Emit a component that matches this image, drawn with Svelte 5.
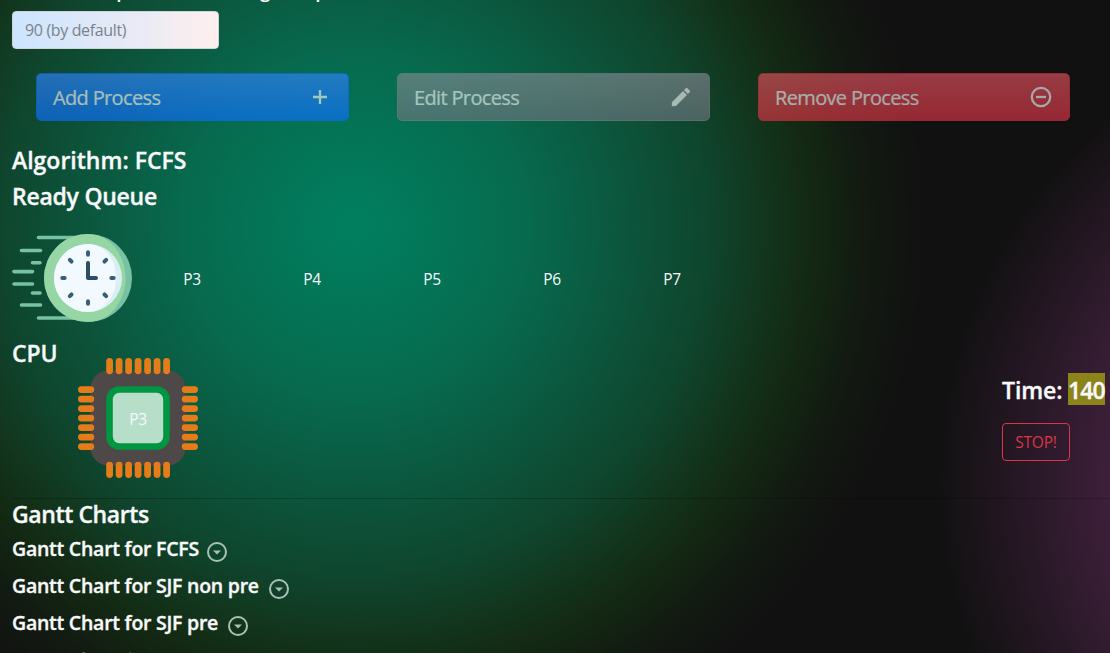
<script>
  const queue = ['P3', 'P4', 'P5', 'P6', 'P7'];
  const charts = [
    { label: 'FCFS', width: 187 },
    { label: 'SJF non pre', width: 249 },
    { label: 'SJF pre', width: 208 }
  ];
  const pins = [0, 1, 2, 3, 4, 5, 6];
  const ticks = [0, 45, 90, 135, 180, 225, 270, 315];
  const speedLines = [
    [25, 3.5, 65], [8, 16.5, 29], [19, 28.8, 28.5], [0.5, 37.6, 21],
    [0.5, 50, 21], [19, 59, 28.5], [8, 71, 29], [25, 84, 65]
  ];
</script>

<main>
  <div class="speed">Select the speed for running setup</div>
  <input placeholder="90 (by default)" />

  <div class="actions">
    <button class="action add"><span>Add Process</span>
      <svg viewBox="0 0 24 24"><path d="M12 5v14M5 12h14" stroke="currentColor" stroke-width="2.300" /></svg>
    </button>
    <button class="action edit"><span>Edit Process</span>
      <svg viewBox="0 0 24 24"><path fill="currentColor" d="M3 17.25V21h3.75L17.81 9.94l-3.75-3.75L3 17.25zM20.71 7.04a1 1 0 0 0 0-1.41l-2.34-2.34a1 1 0 0 0-1.41 0l-1.83 1.83 3.75 3.75 1.83-1.83z" stroke="currentColor" stroke-width="0.300" /></svg>
    </button>
    <button class="action remove"><span>Remove Process</span>
      <svg viewBox="0 0 24 24" fill="none" stroke="currentColor" stroke-width="2.300"><circle cx="12" cy="12" r="9.200" /><path d="M7 12h10" /></svg>
    </button>
  </div>

  <h4 class="algo"><span>Algorithm: FCFS</span></h4>
  <h4 class="ready"><span>Ready Queue</span></h4>

  <div class="queue">
    <svg class="clock" width="120" height="88" viewBox="0 0 120 88">
      <g stroke="#78c2a4" stroke-width="3.6" stroke-linecap="round">
        {#each speedLines as [x1, y, x2]}
          <line x1={x1 + 1.5} y1={y} x2={x2 - 0.5} y2={y} />
        {/each}
      </g>
      <circle cx="76" cy="44" r="44" fill="#78c2a4" />
      <path d="M76 0a44 44 0 0 0 0 88c21 0 37.500-20 37.500-44S97 0 76 0z" fill="#96d6a4" />
      <circle cx="76" cy="44" r="34" fill="#d9eff4" />
      <path d="M76 10a34 34 0 0 0 0 68c16 0 28-15 28-34S92 10 76 10z" fill="#f3faff" />
      <g stroke="#365e7d" stroke-width="4" stroke-linecap="round">
        {#each ticks as angle}
          <line x1="76" y1="18.300" x2="76" y2="20.700" transform={`rotate(${angle} 76 44)`} />
        {/each}
        <path d="M76 29v15h8" fill="none" stroke="#2b4d66" stroke-linejoin="round" />
      </g>
    </svg>
    {#each queue as process}
      <span class="process">{process}</span>
    {/each}
  </div>

  <div class="cpu-row">
    <h4 class="cpu"><span>CPU</span></h4>
    <div class="chip">
      <svg width="120" height="120" viewBox="0 0 120 120">
        <rect x="12.500" y="12.500" width="95" height="95" rx="18" fill="#4e4948" />
        <g fill="#e57b19">
          {#each pins as pin}
            <rect x={28.2 + pin * 9.5} y="0" width="6.800" height="16.200" rx="3.400" />
            <rect x={28.2 + pin * 9.5} y="103.800" width="6.800" height="16.200" rx="3.400" />
            <rect x="0" y={28.2 + pin * 9.5} width="16.200" height="6.800" rx="3.400" />
            <rect x="103.800" y={28.2 + pin * 9.5} width="16.200" height="6.800" rx="3.400" />
          {/each}
        </g>
        <rect x="28.200" y="28.200" width="63.600" height="63.600" rx="13" fill="#009540" />
        <rect x="34.800" y="34.800" width="50.400" height="50.400" rx="6.500" fill="#b7dec9" />
      </svg>
      <span class="running">P3</span>
    </div>
    <div class="timer">
      <h4><span class="label">Time:</span><mark>140</mark></h4>
      <button class="stop">STOP!</button>
    </div>
  </div>

  <hr />
  <h4 class="gantt"><span>Gantt Charts</span></h4>
  {#each charts as chart}
    <h5>
      <span style:width={`${chart.width}px`}>Gantt Chart for {chart.label}</span>
      <svg viewBox="0 0 24 24"><circle cx="12" cy="12" r="9" fill="none" stroke="currentColor" stroke-width="2" /><path d="M8 10.500h8l-4 4z" fill="currentColor" /></svg>
    </h5>
  {/each}
  <h5 class="next">Gantt Chart for</h5>
</main>

<style>
  :global(body) { margin: 0; overflow: hidden; background: #111; }
  main {
    box-sizing: border-box;
    width: 1110px;
    height: 653px;
    overflow: hidden;
    padding-left: 12px;
    color: #f8f9fa;
    font: 15px/24px "Open Sans", "Noto Sans", sans-serif;
    background:
      radial-gradient(circle at 1410px 480px, #40203d 0, #3d1f3a 300px, rgba(17, 17, 17, 0) 475px),
      radial-gradient(circle at 355px 225px, #008060 0, #076a4e 170px, #0b573e 265px, #0f452d 355px, #12371f 405px, #132a13 450px, #121a11 510px, #111 570px);
  }
  h4, h5 { margin: 0; font-weight: 600; white-space: nowrap; -webkit-text-stroke: 0.350px #f8f9fa; }
  h4 { font-size: 23px; line-height: 29px; height: 29px; letter-spacing: -0.100px; }
  .speed { height: 24px; margin-top: -22px; font-size: 19px; font-weight: 600; white-space: nowrap; }
  input {
    display: block;
    box-sizing: border-box;
    width: 207px;
    height: 38px;
    margin-top: 9px;
    padding: 0 12px;
    border: 1px solid #ced4da;
    border-radius: 4px;
    font: 16px "Open Sans", sans-serif;
    letter-spacing: -0.350px;
    background: linear-gradient(90deg, #cce5ff, #e4e9f7 50%, #ffefee);
  }
  input::placeholder { color: #7b838a; opacity: 1; }
  .actions { display: grid; grid-template-columns: 313px 313px 312px; gap: 48px; margin: 24px 0 0 24px; }
  .action {
    display: flex;
    align-items: center;
    justify-content: space-between;
    box-sizing: border-box;
    height: 48px;
    padding: 0 16px;
    border: 1px solid;
    border-radius: 5px;
    color: #f8f9fa;
    font: 20px "Open Sans", sans-serif;
    letter-spacing: -0.650px;
    opacity: 0.65;
    -webkit-text-stroke: 0.200px #f8f9fa;
  }
  .action svg { width: 24px; height: 24px; }
  .action span { margin-top: 1px; }
  .add { border-color: #0d6efd; background: linear-gradient(#3184fd, #0d6efd); }
  .edit { border-color: #7f878e; background: linear-gradient(#828a91, #6c757d); }
  .remove { border-color: #dc3545; background: linear-gradient(#e15361, #dc3545); }
  .algo { margin-top: 25px; letter-spacing: 0; }
  .ready { margin-top: 7px; letter-spacing: -0.250px; }
  .queue { display: flex; align-items: center; height: 88px; margin-top: 23px; }
  .process { width: 120px; margin-top: 1px; text-align: center; letter-spacing: -0.400px; font-size: 15.500px; }
  .cpu-row { display: flex; align-items: flex-start; height: 159px; padding-top: 17px; }
  .cpu { width: 46px; }
  .chip { display: grid; place-items: center; margin: 19px 0 0 20px; }
  .chip > * { grid-area: 1 / 1; }
  .running { margin-top: 1px; letter-spacing: -0.400px; font-size: 15.500px; }
  .timer { margin: 34px 0 0 804px; }
  .timer h4 { display: flex; line-height: 35px; height: 32px; }
  .label { width: 66px; }
  mark { width: 37px; height: 32px; color: #f8f9fa; background: #8c841a; letter-spacing: -0.900px; }
  .stop {
    width: 68px;
    height: 38px;
    margin-top: 18px;
    padding: 0;
    border: 1px solid #dc3545;
    border-radius: 4px;
    color: #dc3545;
    background: transparent;
    font: 15.500px "Open Sans", sans-serif;
    letter-spacing: -0.200px;
  }
  hr { height: 1px; margin: 0 0 1px; border: 0; background: rgba(0, 0, 0, 0.2); }
  .gantt { margin-bottom: 5px; letter-spacing: -0.400px; }
  h5 { display: flex; height: 37px; font-size: 19.500px; line-height: 30px; letter-spacing: -0.250px; }
  h5 svg { width: 24px; height: 24px; margin: 6px 0 0 6px; color: #a9c0b4; }
  .next { line-height: 31px; }
</style>
